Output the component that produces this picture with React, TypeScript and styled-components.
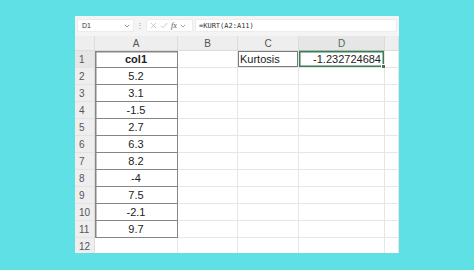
import React from "react";
import styled, { createGlobalStyle, css } from "styled-components";

const Global = createGlobalStyle`
  html, body { margin: 0; padding: 0; }
  body {
    width: 474px;
    height: 270px;
    background: #5ee0e4;
    font-family: "Liberation Sans", Arial, sans-serif;
    overflow: hidden;
  }
`;

const Page = styled.div`
  width: 474px;
  height: 270px;
  padding: 16px 0 0 75px;
  box-sizing: border-box;
`;

const Panel = styled.div`
  width: 324px;
  height: 237px;
  background: #ffffff;
  display: flex;
  flex-direction: column;
  overflow: hidden;
`;

const Toolbar = styled.div`
  height: 20px;
  flex: none;
  background: #f4f4f4;
  display: flex;
  align-items: flex-start;
  padding: 3px 2px 0 2px;
  box-sizing: border-box;
  gap: 2px;
`;

const Box = styled.div<{ $w?: number }>`
  height: 13px;
  background: #ffffff;
  border: 1px solid #ececec;
  border-radius: 2px;
  box-sizing: border-box;
  display: flex;
  align-items: center;
  font-size: 7px;
  color: #444;
  ${(p) => (p.$w ? css`width: ${p.$w}px; flex: none;` : css`flex: 1;`)}
`;

const NameText = styled.span`
  padding-left: 4px;
  flex: 1;
  font-size: 7px;
  color: #333;
`;

const Dots = styled.div`
  width: 8px;
  height: 13px;
  display: flex;
  align-items: center;
  justify-content: center;
  font-size: 8px;
  color: #999;
  flex: none;
`;

const Formula = styled.span`
  padding-left: 3px;
  font-family: "DejaVu Sans Mono", "Liberation Mono", monospace;
  font-size: 7px;
  color: #333;
`;

const IconRow = styled.div`
  display: flex;
  align-items: center;
  gap: 3px;
  padding-left: 3px;
`;

const FxText = styled.span`
  font-family: "Liberation Serif", serif;
  font-style: italic;
  font-size: 8px;
  color: #555;
`;

const Sheet = styled.div`
  display: grid;
  grid-template-columns: 20px 83px 60px 61px 86px 14px;
  grid-template-rows: 15px;
  grid-auto-rows: 17px;
`;

const Corner = styled.div`
  background: #eeeeee;
  border-right: 1px solid #dcdcdc;
  border-bottom: 1px solid #dcdcdc;
  box-sizing: border-box;
`;

const ColHead = styled.div<{ $active?: boolean }>`
  background: ${(p) => (p.$active ? "#e6e6e6" : "#eeeeee")};
  border-right: 1px solid #dcdcdc;
  border-bottom: 1px solid ${(p) => (p.$active ? "#a8bfb0" : "#dcdcdc")};
  box-sizing: border-box;
  display: flex;
  align-items: center;
  justify-content: center;
  font-size: 10px;
  color: ${(p) => (p.$active ? "#4d6b57" : "#555")};
`;

const RowHead = styled.div<{ $active?: boolean }>`
  background: ${(p) => (p.$active ? "#e6e6e6" : "#eeeeee")};
  border-right: 1px solid #dcdcdc;
  border-bottom: 1px solid #e2e2e2;
  box-sizing: border-box;
  display: flex;
  align-items: center;
  padding-left: 4px;
  font-size: 10px;
  color: #555;
`;

type Variant = "plain" | "table" | "tableTop" | "boxed" | "selected";

const Cell = styled.div<{ $align?: "left" | "center" | "right"; $bold?: boolean; $variant?: Variant }>`
  position: relative;
  border-right: 1px solid #e6e6e6;
  border-bottom: 1px solid #e6e6e6;
  box-sizing: border-box;
  display: flex;
  align-items: center;
  justify-content: ${(p) =>
    p.$align === "center" ? "center" : p.$align === "right" ? "flex-end" : "flex-start"};
  padding: 0 2px;
  font-size: 11px;
  font-weight: ${(p) => (p.$bold ? 700 : 400)};
  color: #222;
  ${(p) =>
    (p.$variant === "table" || p.$variant === "tableTop") &&
    css`
      border-right: 1.5px solid #858585;
      border-bottom: 1.5px solid #858585;
      box-shadow: inset 1.5px ${p.$variant === "tableTop" ? "1.5px" : "0"} 0 #858585;
    `}
  ${(p) =>
    p.$variant === "boxed" &&
    css`
      box-shadow: inset 0 0 0 1px #7a7a7a;
    `}
  ${(p) =>
    p.$variant === "selected" &&
    css`
      box-shadow: inset 0 0 0 1.5px #3e7a58;
      padding-right: 3px;
    `}
`;

const Handle = styled.span`
  position: absolute;
  right: -2px;
  bottom: -2px;
  width: 3px;
  height: 3px;
  background: #3e7a58;
  border: 1px solid #fff;
  box-sizing: content-box;
`;

const Chevron = ({ color = "#888" }: { color?: string }) => (
  <svg width="6" height="4" viewBox="0 0 6 4" style={{ flex: "none" }}>
    <path d="M0.8 0.8 L3 3 L5.2 0.8" fill="none" stroke={color} strokeWidth="0.9" />
  </svg>
);

const values = ["5.2", "3.1", "-1.5", "2.7", "6.3", "8.2", "-4", "7.5", "-2.1", "9.7"];

export default function App() {
  const rows: React.ReactNode[] = [];
  for (let r = 1; r <= 12; r++) {
    const a = r === 1 ? "col1" : r <= 11 ? values[r - 2] : "";
    const aVariant: Variant = r === 1 ? "tableTop" : r <= 11 ? "table" : "plain";
    rows.push(
      <React.Fragment key={r}>
        <RowHead $active={r === 1}>{r}</RowHead>
        <Cell $align="center" $bold={r === 1} $variant={aVariant}>
          {a}
        </Cell>
        <Cell />
        <Cell $variant={r === 1 ? "boxed" : "plain"}>{r === 1 ? "Kurtosis" : ""}</Cell>
        <Cell $align="right" $variant={r === 1 ? "selected" : "plain"}>
          {r === 1 ? "-1.232724684" : ""}
          {r === 1 && <Handle />}
        </Cell>
        <Cell />
      </React.Fragment>
    );
  }

  return (
    <>
      <Global />
      <Page>
        <Panel>
          <Toolbar>
            <Box $w={57}>
              <NameText>D1</NameText>
              <Chevron />
              <span style={{ width: 3 }} />
            </Box>
            <Dots>⋮</Dots>
            <Box $w={47}>
              <IconRow>
                <svg width="7" height="7" viewBox="0 0 7 7">
                  <path d="M1 1 L6 6 M6 1 L1 6" stroke="#bbb" strokeWidth="0.8" />
                </svg>
                <svg width="8" height="7" viewBox="0 0 8 7">
                  <path d="M1 3.8 L3 5.8 L7 1" fill="none" stroke="#bbb" strokeWidth="0.8" />
                </svg>
                <FxText>fx</FxText>
                <Chevron color="#999" />
              </IconRow>
            </Box>
            <Box>
              <Formula>=KURT(A2:A11)</Formula>
            </Box>
          </Toolbar>
          <Sheet>
            <Corner />
            <ColHead>A</ColHead>
            <ColHead>B</ColHead>
            <ColHead>C</ColHead>
            <ColHead $active>D</ColHead>
            <ColHead />
            {rows}
          </Sheet>
        </Panel>
      </Page>
    </>
  );
}
